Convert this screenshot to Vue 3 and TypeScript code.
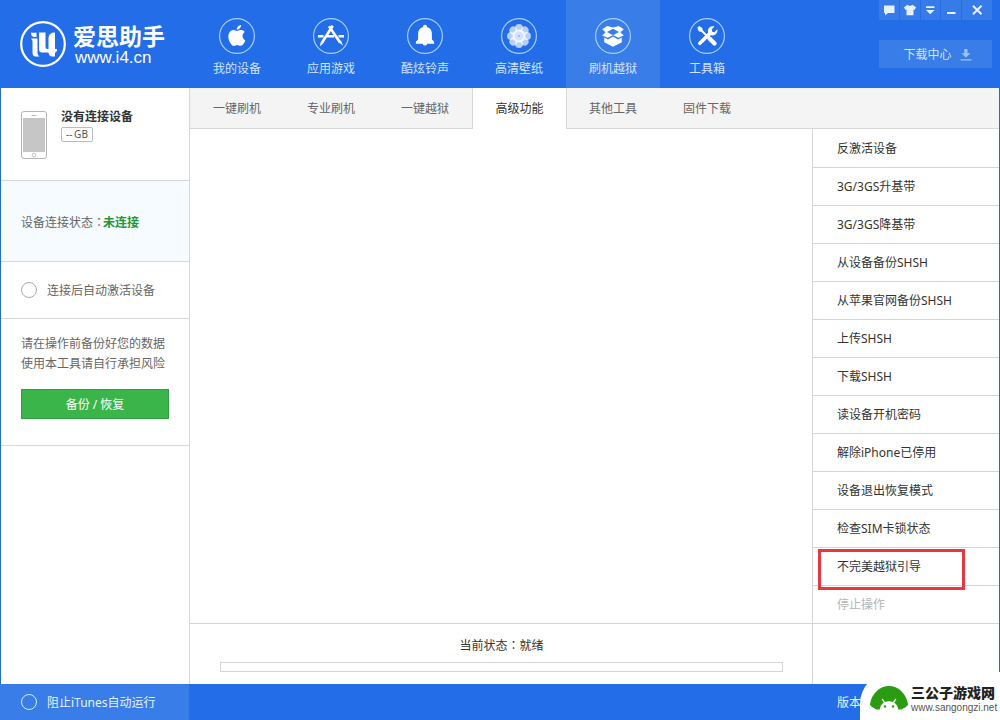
<script setup lang="ts">
import { ref } from 'vue'

type NavIcon = 'apple' | 'store' | 'bell' | 'flower' | 'box' | 'tools'

interface NavItem {
  label: string
  icon: NavIcon
}

interface Action {
  label: string
  disabled?: boolean
  marked?: boolean
}

const navItems: NavItem[] = [
  { label: '我的设备', icon: 'apple' },
  { label: '应用游戏', icon: 'store' },
  { label: '酷炫铃声', icon: 'bell' },
  { label: '高清壁纸', icon: 'flower' },
  { label: '刷机越狱', icon: 'box' },
  { label: '工具箱', icon: 'tools' },
]

const tabs: string[] = ['一键刷机', '专业刷机', '一键越狱', '高级功能', '其他工具', '固件下载']

const actions: Action[] = [
  { label: '反激活设备' },
  { label: '3G/3GS升基带' },
  { label: '3G/3GS降基带' },
  { label: '从设备备份SHSH' },
  { label: '从苹果官网备份SHSH' },
  { label: '上传SHSH' },
  { label: '下载SHSH' },
  { label: '读设备开机密码' },
  { label: '解除iPhone已停用' },
  { label: '设备退出恢复模式' },
  { label: '检查SIM卡锁状态' },
  { label: '不完美越狱引导', marked: true },
  { label: '停止操作', disabled: true },
]

const petals: number[] = [0, 45, 90, 135, 180, 225, 270, 315]

const activeNav = ref(4)
const activeTab = ref(3)
const autoActivate = ref(false)
const blockItunes = ref(false)
</script>

<template>
  <div class="window">
    <header class="header">
      <div class="brand">
        <svg class="brand-mark" viewBox="0 0 46 46" aria-hidden="true">
          <circle cx="23" cy="23" r="21.8" fill="none" stroke="#fff" stroke-width="2.2" />
          <path fill="#fff" d="M11 11.500q3 .5 5.500 0v4.500h-2.500q-3-.5-3-4.500zM11 17.500h6.500V32q0 2.500 2 3.500h-4q-3 0-3-4V20.500q0-1.500-1.500-3z" />
          <path fill="#fff" d="M19 11.500h6.500V26q0 2 2 2h1V17q0-5.500 6.500-5.500V28h2q0 3.500-2 3.500v4h-3q-3 0-3.500-4H22q-3 0-3-3.500z" />
        </svg>
        <div class="brand-text">
          <span class="brand-name">爱思助手</span>
          <span class="brand-url">www.i4.cn</span>
        </div>
      </div>

      <nav class="nav">
        <button
          v-for="(item, i) in navItems"
          :key="item.icon"
          type="button"
          class="nav-item"
          :class="{ active: i === activeNav }"
          @click="activeNav = i"
        >
          <svg class="nav-icon" viewBox="0 0 36 36" aria-hidden="true">
            <circle cx="18" cy="18" r="17.4" fill="none" stroke="#a3cdfb" stroke-width="1.2" />
            <g v-if="item.icon === 'apple'" transform="translate(7.400 7) scale(.87)">
              <path fill="#fff" d="M12.152 6.896c-.948 0-2.415-1.078-3.960-1.040-2.040.027-3.910 1.183-4.961 3.014-2.117 3.675-.546 9.103 1.519 12.090 1.013 1.454 2.208 3.090 3.792 3.039 1.520-.065 2.090-.987 3.935-.987 1.831 0 2.350.987 3.960.948 1.637-.026 2.676-1.480 3.676-2.948 1.156-1.688 1.636-3.325 1.662-3.415-.039-.013-3.182-1.221-3.220-4.857-.026-3.040 2.480-4.494 2.597-4.559-1.429-2.090-3.623-2.324-4.390-2.376-2-.156-3.675 1.090-4.610 1.090zM15.530 3.830c.843-1.012 1.400-2.427 1.245-3.830-1.207.052-2.662.805-3.532 1.818-.780.896-1.454 2.338-1.273 3.714 1.338.104 2.715-.688 3.559-1.701" />
            </g>
            <g v-else-if="item.icon === 'store'" fill="none" stroke="#fff">
              <path stroke-width="2.600" d="M19.700 7.800 8.800 25" />
              <path stroke-width="2.600" d="M16 8.200 26.800 24" />
              <path stroke-width="2.400" d="M5 18.300h5.500M13.800 18.300h7.400M25.500 18.300H31" />
              <path stroke="none" fill="#fff" d="M7.600 24.300 10 25.800l-3 2.400zM25.200 24l2.800-1.600 2 5z" />
            </g>
            <g v-else-if="item.icon === 'bell'" fill="#fff">
              <path d="M18 6.800a1.900 1.900 0 0 1 1.900 2.200c3.400 1 5 3.600 5 7v5.500l2.200 2v2.200H8.900v-2.200l2.200-2V16c0-3.400 1.600-6 5-7A1.900 1.900 0 0 1 18 6.800z" />
              <path d="M15.600 25h4.800q0 2.500-2.400 2.500T15.600 25z" />
            </g>
            <g v-else-if="item.icon === 'flower'" fill="#fff">
              <circle
                v-for="angle in petals"
                :key="angle"
                cx="18"
                cy="10"
                r="3.9"
                fill-opacity=".68"
                :transform="`rotate(${angle} 18 18)`"
              />
              <circle cx="18" cy="18" r="6.500" fill-opacity=".8" />
              <circle cx="18" cy="18" r="1" fill="#8ab5f6" />
            </g>
            <g v-else-if="item.icon === 'box'" fill="#fff">
              <path fill-rule="evenodd" d="m12.200 8 5.800 1.400L23.800 8l5 3.300-3.400 2.900 3.400 3.200-5.600 2.300-5.200-2.800-5.200 2.800-5.600-2.300 3.400-3.200-3.400-2.900zM18 10.800l-6 3.300 6 3.100 6-3.100z" />
              <path d="m9.200 19.500 3.800 1.900 5-2.900 5 2.900 3.800-1.900v4.700L18 28.800l-8.800-4.600z" />
            </g>
            <g v-else>
              <path d="m10 10 11 11" stroke="#fff" stroke-width="2" />
              <path d="m20.500 20.500 5 5" stroke="#fff" stroke-width="4.400" stroke-linecap="round" />
              <path fill="#fff" d="m8.300 9.800 1.800-1.700 3.200 1.800.3 2.500-1.500 1.300-2.300-.5z" />
              <path d="M10.800 25.300 21 15.400" stroke="#fff" stroke-width="3.600" stroke-linecap="round" />
              <path fill="#fff" d="M25.500 8.600 22.700 11.400l.5 2.300 2.200.5 2.900-2.900c.7 3.200-1.600 6.100-4.600 6.100-3.300 0-5.300-2.500-4.700-5.200.5-2.900 3.500-4.600 6.500-3.600z" />
            </g>
          </svg>
          <span>{{ item.label }}</span>
        </button>
      </nav>

      <div class="tools">
        <div class="controls">
          <button type="button" aria-label="反馈">
            <svg viewBox="0 0 12 12"><path fill="#e4f1ff" d="M1 1.500h10.500V9H5l-3 2.500V9H1z" /></svg>
          </button>
          <button type="button" aria-label="皮肤">
            <svg viewBox="0 0 12 12"><path fill="#e4f1ff" d="M3.500.8Q6 3 8.500.8L12 3.200l-1.400 2.700-1.100-.6v5.900h-7V5.300l-1.100.6L0 3.200z" /></svg>
          </button>
          <button type="button" aria-label="菜单">
            <svg viewBox="0 0 12 12"><path fill="#e4f1ff" d="M2 2.200h8.500v1.800H2zM2 6h8.500L6.200 10.200z" /></svg>
          </button>
          <button type="button" aria-label="最小化">
            <svg viewBox="0 0 12 12"><path fill="#e4f1ff" d="M2 8h8.500v2H2z" /></svg>
          </button>
          <button type="button" class="wide" aria-label="关闭">
            <svg viewBox="0 0 12 12"><path stroke="#e4f1ff" stroke-width="2" d="m2 1.800 8.500 8.500M10.500 1.800 2 10.300" /></svg>
          </button>
        </div>
        <button type="button" class="download">
          <span>下载中心</span>
          <svg viewBox="0 0 12 12" aria-hidden="true"><path fill="#9fc3f7" d="M4.300 0h3.200v4.200h3L6 8.500 1.400 4.200h2.900zM.5 10.200h11v1.300H.5z" /></svg>
        </button>
      </div>
    </header>

    <div class="body">
      <aside class="sidebar">
        <section class="device">
          <svg class="phone" viewBox="0 0 26 48" aria-hidden="true">
            <rect x=".5" y=".5" width="25" height="47" rx="2.500" fill="#fff" stroke="#b5b5b5" />
            <path d="M10.500 4.500h5" stroke="#bbb" />
            <rect x="2" y="7" width="22" height="34" fill="#c6c6c6" />
            <circle cx="13" cy="44.200" r="1.800" fill="none" stroke="#b5b5b5" stroke-width=".8" />
          </svg>
          <div class="device-info">
            <strong>没有连接设备</strong>
            <span class="capacity">--&thinsp;GB</span>
          </div>
        </section>
        <section class="connection">
          设备连接状态<span class="colon">：</span><b>未连接</b>
        </section>
        <section class="auto">
          <label class="check">
            <input v-model="autoActivate" type="checkbox" />
            <span>连接后自动激活设备</span>
          </label>
        </section>
        <section class="backup">
          <p>请在操作前备份好您的数据<br />使用本工具请自行承担风险</p>
          <button type="button" class="backup-button">备份 / 恢复</button>
        </section>
      </aside>

      <main class="main">
        <div class="tabs" role="tablist">
          <button
            v-for="(tab, i) in tabs"
            :key="tab"
            type="button"
            role="tab"
            class="tab"
            :class="{ active: i === activeTab }"
            :aria-selected="i === activeTab"
            @click="activeTab = i"
          >
            {{ tab }}
          </button>
        </div>
        <div class="workspace">
          <div class="stage">
            <div class="canvas"></div>
            <div class="status">
              <label for="task-progress">当前状态<span class="colon">：</span>就绪</label>
              <progress id="task-progress" value="0" max="100"></progress>
            </div>
          </div>
          <ul class="actions">
            <li v-for="action in actions" :key="action.label" :class="{ marked: action.marked }">
              <button type="button" :disabled="action.disabled">{{ action.label }}</button>
            </li>
          </ul>
        </div>
      </main>
    </div>

    <footer class="footer">
      <label class="check check-light">
        <input v-model="blockItunes" type="checkbox" />
        <span>阻止iTunes自动运行</span>
      </label>
      <span class="version">版本</span>
      <div class="site">
        <svg class="site-mark" viewBox="0 0 40 26" aria-hidden="true">
          <path fill="#2a9c12" d="M1 19C3 8 11 1 20 1s17 7 19 18c.3 2-4 4-6.500 5.500h-25C5 23 .7 21 1 19z" />
          <path fill="#fff" d="M10.500 26c.3-4.500 2.300-7.300 4.300-8.500l-2.200-3.300 1-.6 2.400 3.500q4-1.500 8 0l2.400-3.500 1 .6-2.200 3.300c2 1.200 4 4 4.300 8.500z" />
          <circle cx="16" cy="21.500" r="1.200" fill="#2a9c12" />
          <circle cx="24" cy="21.500" r="1.200" fill="#2a9c12" />
        </svg>
        <div class="site-text">
          <span class="site-name">三公子游戏网</span>
          <span class="site-url">www.sangongzi.net</span>
        </div>
      </div>
    </footer>
  </div>
</template>

<style>
body {
  margin: 0;
}
</style>

<style scoped>
.window {
  display: flex;
  flex-direction: column;
  min-height: 100vh;
  background: #fff;
  color: #333;
  font-family: "Noto Sans", "Noto Sans CJK SC", sans-serif;
  font-size: 12px;
  line-height: 20px;
}

.window,
.window *,
.window *::after {
  box-sizing: border-box;
}

button {
  margin: 0;
  padding: 0;
  border: 0;
  background: none;
  color: inherit;
  font: inherit;
  cursor: pointer;
}

.colon {
  font-family: "Noto Sans CJK TC", sans-serif;
}

.header {
  display: flex;
  height: 88px;
  background: #236ee8;
  color: #cfe4ff;
}

.brand {
  display: flex;
  align-items: center;
  gap: 7px;
  width: 190px;
  padding-left: 20px;
  color: #fff;
}

.brand-mark {
  width: 46px;
  height: 46px;
}

.brand-text {
  display: flex;
  flex-direction: column;
  padding-top: 2px;
}

.brand-name {
  font-family: "Liberation Sans", "Noto Sans CJK SC", sans-serif;
  font-size: 23px;
  font-weight: 700;
  line-height: 26px;
}

.brand-url {
  padding-left: 2px;
  font-family: "Liberation Sans", Arial, sans-serif;
  font-size: 17px;
  line-height: 16px;
}

.nav {
  display: flex;
}

.nav-item {
  display: flex;
  flex-direction: column;
  align-items: center;
  gap: 5px;
  width: 94px;
  padding-top: 18px;
}

.nav-item.active {
  background: #397de9;
}

.nav-icon {
  width: 36px;
  height: 36px;
}

.tools {
  display: flex;
  flex-direction: column;
  gap: 20px;
  width: 113px;
  margin-right: 8px;
  margin-left: auto;
}

.controls {
  display: flex;
  gap: 1px;
}

.controls button {
  display: flex;
  flex: 1;
  align-items: center;
  justify-content: center;
  height: 20px;
  background: #377be9;
}

.controls .wide {
  flex: 0 0 30px;
}

.controls svg,
.download svg {
  width: 12px;
  height: 12px;
}

.download {
  display: flex;
  align-items: center;
  justify-content: center;
  gap: 8px;
  height: 28px;
  padding-top: 1px;
  padding-left: 4px;
  background: #397de9;
}

.body {
  display: flex;
  flex: 1;
  border-right: 1px solid #2375a8;
  border-left: 1px solid #2372c0;
}

.sidebar {
  width: 189px;
  border-right: 1px solid #d5d9dc;
  color: #666;
}

.sidebar section {
  border-bottom: 1px solid #d5d9dc;
}

.device {
  display: flex;
  gap: 14px;
  height: 93px;
  padding: 23px 0 0 20px;
}

.phone {
  width: 26px;
  height: 48px;
}

.device-info {
  display: flex;
  flex-direction: column;
  align-items: flex-start;
  margin-top: -4px;
  color: #333;
}

.capacity {
  padding: 0 4px;
  border: 1px solid #bbb;
  border-radius: 2px;
  color: #555;
  font-size: 10px;
  line-height: 13px;
}

.connection {
  height: 81px;
  padding: 31px 0 0 20px;
  background: #f5fbff;
}

.connection b {
  margin-left: -2px;
  color: #21963a;
}

.auto {
  display: flex;
  height: 57px;
  padding-left: 20px;
}

.check {
  display: flex;
  align-items: center;
  gap: 10px;
}

.check span {
  padding-top: 2px;
}

.check input {
  appearance: none;
  width: 16px;
  height: 16px;
  margin: 0;
  border: 1px solid #aaa;
  border-radius: 50%;
}

.check input:checked {
  background: #3ab54a;
}

.backup {
  padding: 15px 20px 26px;
}

.backup p {
  margin: 0 0 15px;
  white-space: nowrap;
}

.backup-button {
  width: 100%;
  height: 30px;
  padding-top: 2px;
  border: 1px solid #2da03d;
  background: #3ab54a;
  color: #fff;
}

.main {
  display: flex;
  flex: 1;
  flex-direction: column;
}

.tabs {
  display: flex;
  height: 41px;
  border-bottom: 1px solid #d8d8d8;
  background: #f4f4f4;
}

.tab {
  width: 94px;
  height: 41px;
  border-right: 1px solid transparent;
  border-left: 1px solid transparent;
  color: #666;
}

.tab.active {
  width: 95px;
  margin-right: -1px;
  border-color: #d8d8d8;
  background: #fff;
  color: #333;
}

.workspace {
  display: flex;
  flex: 1;
}

.stage {
  display: flex;
  flex: 1;
  flex-direction: column;
}

.canvas {
  flex: 1;
}

.status {
  display: flex;
  flex-direction: column;
  height: 61px;
  padding: 11px 29px 0 30px;
  border-top: 1px solid #d5d5d5;
}

.status label {
  align-self: center;
}

.status progress {
  appearance: none;
  width: 100%;
  height: 10px;
  margin-top: 6px;
  border: 1px solid #d5d5d5;
  background: #fff;
}

.status progress::-webkit-progress-bar {
  background: #fff;
}

.status progress::-webkit-progress-value {
  background: #3ab54a;
}

.actions {
  width: 187px;
  margin: 0;
  padding: 1px 0 0;
  border-left: 1px solid #d5d5d5;
  list-style: none;
}

.actions li {
  position: relative;
  height: 38px;
  border-bottom: 1px solid #d5d5d5;
}

.actions button {
  width: 100%;
  height: 37px;
  padding-left: 24px;
  text-align: left;
}

.actions button:disabled {
  color: #b5b5b5;
}

.marked::after {
  position: absolute;
  z-index: 1;
  top: 1px;
  left: 5px;
  width: 147px;
  height: 41px;
  border: 3px solid #e5393d;
  content: "";
  pointer-events: none;
}

.footer {
  position: relative;
  display: flex;
  height: 36px;
  background: #236ee8;
  color: #e6f2ff;
}

.check-light {
  width: 189px;
  padding-left: 21px;
  background: #397de9;
}

.check-light input {
  border-color: #d5ecff;
}

.version {
  margin-right: 139px;
  margin-left: auto;
  padding-top: 1px;
  line-height: 36px;
}

.site {
  position: absolute;
  right: 0;
  bottom: 0;
  display: flex;
  align-items: center;
  gap: 2px;
  width: 140px;
  height: 48px;
  padding-top: 4px;
  padding-left: 9px;
  border-top-left-radius: 32px;
  background: #fff;
}

.site-mark {
  flex: none;
  width: 40px;
  height: 26px;
}

.site-text {
  display: flex;
  flex-direction: column;
  gap: 1px;
  padding-top: 2px;
  white-space: nowrap;
}

.site-name {
  color: #222;
  font-family: "Liberation Sans", "Noto Sans CJK SC", sans-serif;
  font-size: 14px;
  font-weight: 900;
  line-height: 16px;
}

.site-url {
  color: #555;
  font-family: "Liberation Sans", Arial, sans-serif;
  font-size: 10px;
  line-height: 11px;
}
</style>
